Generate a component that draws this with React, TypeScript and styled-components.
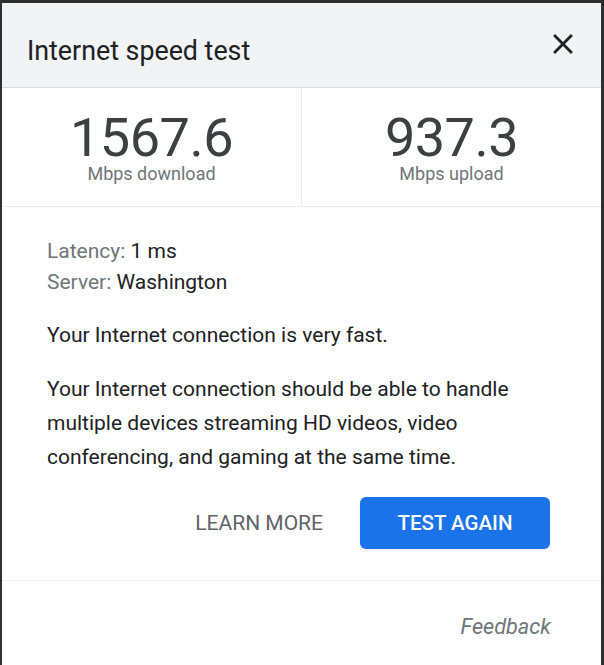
import React from "react";
import styled, { createGlobalStyle } from "styled-components";

const GlobalStyle = createGlobalStyle`
  html, body {
    margin: 0;
    padding: 0;
    background: #2f2f2f;
  }
  body {
    padding: 3px 3px 0 2px;
    font-family: Roboto, "Liberation Sans", Arial, sans-serif;
    -webkit-font-smoothing: antialiased;
  }
`;

const Panel = styled.div`
  background: #fff;
  height: 662px;
  display: flex;
  flex-direction: column;
`;

const Header = styled.div`
  box-sizing: border-box;
  height: 85px;
  background: #f1f3f4;
  border-bottom: 1px solid #dadce0;
  padding: 0 21px 0 25px;
  display: flex;
  align-items: center;
  justify-content: space-between;
`;

const Title = styled.h1`
  margin: 0;
  padding-top: 12px;
  font-size: 26.8px;
  line-height: 32px;
  font-weight: 400;
  color: #202124;
`;

const CloseButton = styled.button`
  width: 34px;
  height: 34px;
  margin-bottom: 2px;
  padding: 0;
  border: none;
  background: transparent;
  color: #202124;
  cursor: pointer;
  display: flex;

  svg {
    width: 34px;
    height: 34px;
  }
`;

const Stats = styled.div`
  box-sizing: border-box;
  height: 119px;
  display: flex;
  border-bottom: 1px solid #ececec;
`;

const Stat = styled.div<{ $divided?: boolean }>`
  flex: 1;
  padding-top: 5px;
  display: flex;
  flex-direction: column;
  align-items: center;
  justify-content: center;
  gap: 4px;
  border-left: ${({ $divided }) => ($divided ? "1px solid #e8eaed" : "none")};
`;

const Value = styled.div`
  font-size: 54px;
  line-height: 44px;
  font-weight: 400;
  letter-spacing: -0.5px;
  color: #3c4043;
`;

const Unit = styled.div`
  font-size: 18px;
  line-height: 19px;
  color: #70757a;
`;

const Body = styled.div`
  padding: 29px 51px 31px 45px;
  border-bottom: 1px solid #f1f1f1;
  font-size: 21px;
  color: #202124;
`;

const InfoLine = styled.div`
  line-height: 31px;
`;

const InfoLabel = styled.span`
  color: #70757a;
`;

const Paragraph = styled.p`
  margin: 20px 0 0;
  line-height: 34px;
`;

const Actions = styled.div`
  margin-top: 23px;
  display: flex;
  justify-content: flex-end;
  align-items: center;
  gap: 29px;
`;

const TextButton = styled.button`
  padding: 0 8px;
  border: none;
  background: transparent;
  font-family: inherit;
  font-size: 21px;
  color: #5f6368;
  cursor: pointer;
`;

const PrimaryButton = styled.button`
  width: 190px;
  height: 52px;
  border: none;
  border-radius: 6px;
  background: #1a73e8;
  color: #fff;
  font-family: inherit;
  font-size: 20.5px;
  font-weight: 500;
  box-shadow: 0 2px 3px rgba(60, 64, 67, 0.08);
  cursor: pointer;
`;

const Footer = styled.div`
  padding: 34px 50px 0;
  display: flex;
  justify-content: flex-end;
`;

const FeedbackLink = styled.a`
  font-size: 21.7px;
  line-height: 24px;
  font-style: italic;
  color: #70757a;
  text-decoration: none;
  cursor: pointer;
`;

const CloseIcon = () => (
  <svg viewBox="0 0 24 24" fill="currentColor" aria-hidden="true">
    <path d="M19 6.41L17.59 5 12 10.59 6.41 5 5 6.41 10.59 12 5 17.59 6.41 19 12 13.41 17.59 19 19 17.59 13.41 12z" />
  </svg>
);

const App: React.FC = () => {
  return (
    <>
      <GlobalStyle />
      <Panel>
        <Header>
          <Title>Internet speed test</Title>
          <CloseButton aria-label="Close">
            <CloseIcon />
          </CloseButton>
        </Header>
        <Stats>
          <Stat>
            <Value>1567.6</Value>
            <Unit>Mbps download</Unit>
          </Stat>
          <Stat $divided>
            <Value>937.3</Value>
            <Unit>Mbps upload</Unit>
          </Stat>
        </Stats>
        <Body>
          <InfoLine>
            <InfoLabel>Latency:</InfoLabel> 1 ms
          </InfoLine>
          <InfoLine>
            <InfoLabel>Server:</InfoLabel> Washington
          </InfoLine>
          <Paragraph>Your Internet connection is very fast.</Paragraph>
          <Paragraph>
            Your Internet connection should be able to handle multiple devices
            streaming HD videos, video conferencing, and gaming at the same time.
          </Paragraph>
          <Actions>
            <TextButton>LEARN MORE</TextButton>
            <PrimaryButton>TEST AGAIN</PrimaryButton>
          </Actions>
        </Body>
        <Footer>
          <FeedbackLink>Feedback</FeedbackLink>
        </Footer>
      </Panel>
    </>
  );
};

export default App;
